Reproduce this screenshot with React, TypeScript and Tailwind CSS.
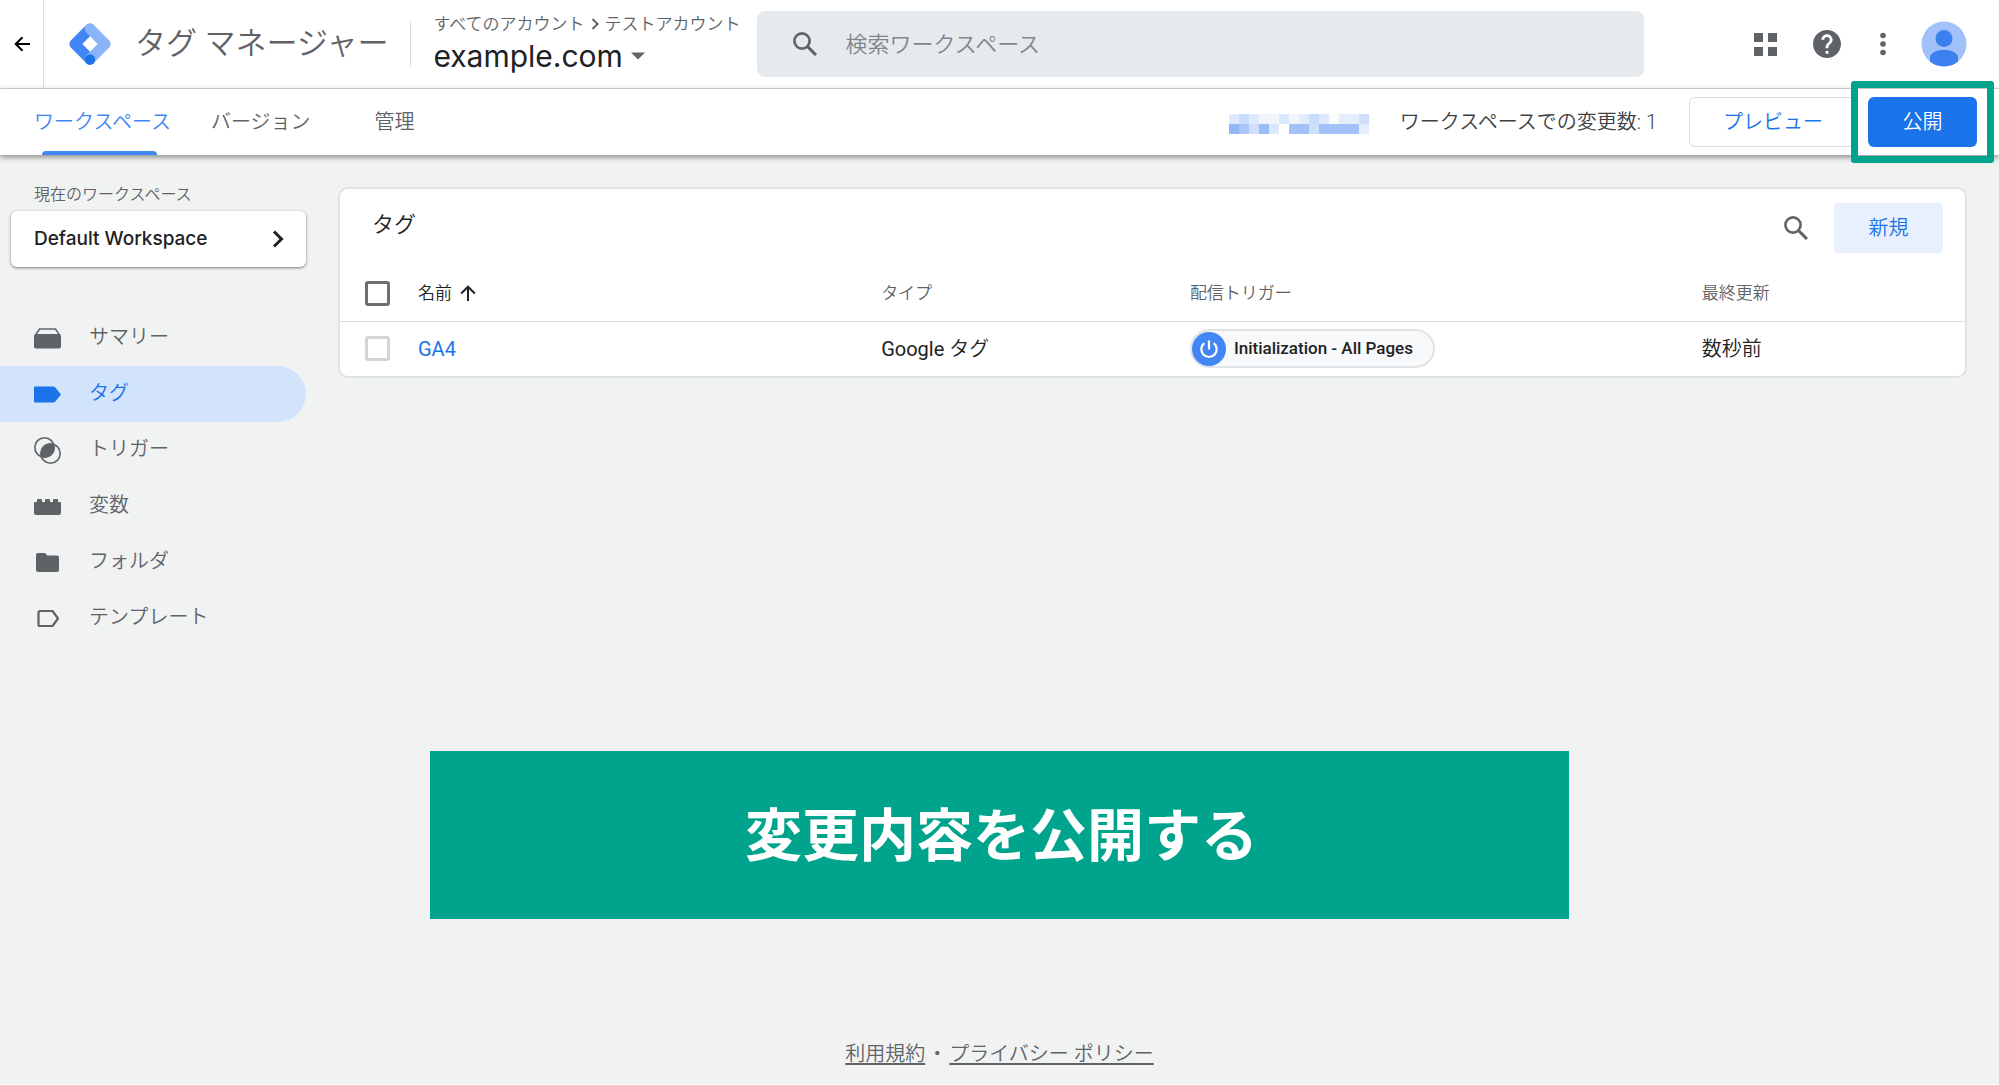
import { useState } from 'react'
import type { ReactNode } from 'react'

type NavItem = { id: string; label: string; icon: ReactNode }

const NAV_ITEMS: NavItem[] = [
  {
    id: 'summary',
    label: 'サマリー',
    icon: (
      <>
        <path d="M1.500 10l4-6h16l4 6" fill="none" stroke="currentColor" strokeWidth="1.4" />
        <path d="M0 11a2 2 0 0 1 2-2h23a2 2 0 0 1 2 2v10.500a2 2 0 0 1-2 2H2a2 2 0 0 1-2-2z" />
      </>
    ),
  },
  {
    id: 'tags',
    label: 'タグ',
    icon: <path d="M0 6.500a1 1 0 0 1 1-1h18.500a2 2 0 0 1 1.600.8L27 13.500l-5.900 7.200a2 2 0 0 1-1.600.8H1a1 1 0 0 1-1-1z" />,
  },
  {
    id: 'triggers',
    label: 'トリガー',
    icon: (
      <>
        <circle cx="10.500" cy="10.500" r="9.700" fill="none" stroke="currentColor" strokeWidth="1.600" />
        <circle cx="16.500" cy="16.500" r="9.700" fill="none" stroke="currentColor" strokeWidth="1.600" />
        <path d="M20 7.200A10 10 0 0 1 7.200 20 10 10 0 0 1 20 7.200z" />
      </>
    ),
  },
  {
    id: 'variables',
    label: '変数',
    icon: <path d="M0 10a1 1 0 0 1 1-1h2V7a1 1 0 0 1 1-1h3a1 1 0 0 1 1 1v2h3V7a1 1 0 0 1 1-1h3a1 1 0 0 1 1 1v2h3V7a1 1 0 0 1 1-1h3a1 1 0 0 1 1 1v2h2a1 1 0 0 1 1 1v10a2 2 0 0 1-2 2H2a2 2 0 0 1-2-2z" />,
  },
  {
    id: 'folders',
    label: 'フォルダ',
    icon: <path d="M2 6a2 2 0 0 1 2-2h7l2.500 2.500H23a2 2 0 0 1 2 2V21a2 2 0 0 1-2 2H4a2 2 0 0 1-2-2z" />,
  },
  {
    id: 'templates',
    label: 'テンプレート',
    icon: <path d="M4.500 7.500A1.500 1.500 0 0 1 6 6h12.500l5.500 7.500-5.500 7.500H6a1.500 1.500 0 0 1-1.500-1.500z" fill="none" stroke="currentColor" strokeWidth="2.200" strokeLinejoin="round" />,
  },
]

const TABS = [
  { id: 'workspace', label: 'ワークスペース' },
  { id: 'versions', label: 'バージョン' },
  { id: 'admin', label: '管理' },
]

// redacted container id, one colour per block
const MASK = [
  ['#dfe9fc', '#cadcfb', '#dfe9fc', '#f1f4f8', '#f1f5fc', '#dbe7fc', '#f1f4f8', '#e4edfd', '#cadcfb', '#dfe9fc', '#fafbfd', '#e4edfd', '#e4edfd', '#cfdffb'],
  ['#93b7f5', '#a9c6f8', '#cfdffb', '#9bbcf5', '#dbe7fc', '#ffffff', '#a2c1f7', '#a2c1f7', '#cfdffb', '#a2c1f7', '#a2c1f7', '#a2c1f7', '#a2c1f7', '#e4edfd'],
]

function SearchIcon() {
  return (
    <svg viewBox="0 0 24 24" className="size-6 shrink-0 text-[#5f6368]" fill="none" stroke="currentColor" strokeWidth="2.600" aria-hidden="true">
      <circle cx="9" cy="9" r="7.600" />
      <path d="M14.600 14.600l8.400 8.400" strokeWidth="3" />
    </svg>
  )
}

function Header() {
  return (
    <header className="flex h-[89px] items-center border-b border-[#dadce0] bg-white pr-8">
      <button aria-label="戻る" className="flex h-full w-11 shrink-0 items-center justify-center border-r border-[#dadce0] text-black">
        <svg viewBox="0 0 16 16" className="size-4" fill="none" stroke="currentColor" strokeWidth="2" aria-hidden="true">
          <path d="M16 8H2M8.500 1.200L1.700 8l6.800 6.800" />
        </svg>
      </button>

      <a href="#home" className="ml-[25px] flex shrink-0 items-center gap-6">
        <svg viewBox="0 0 42 42" className="size-[42px]" fill="none" strokeWidth="10.800" strokeLinejoin="round" strokeLinecap="round" aria-hidden="true">
          <path d="M21 5.800L5.800 21 21 36.200" stroke="#4285f4" />
          <path d="M21 5.800L36.200 21 21 36.200" stroke="#8ab4f8" />
          <circle cx="21" cy="36.500" r="5.200" fill="#1a73e8" />
        </svg>
        <span className="text-[31px] leading-10 font-[350] text-[#5f6368]">タグ マネージャー</span>
      </a>

      <div className="ml-[22px] h-11 w-px shrink-0 bg-[#dadce0]" />

      <div className="ml-[22px] w-[324px] shrink-0">
        <nav className="flex items-center gap-1.5 text-[17px] leading-6 font-[350] text-[#5f6368]">
          <a href="#accounts">すべてのアカウント</a>
          <svg viewBox="0 0 8 12" className="h-3 w-2" fill="none" stroke="currentColor" strokeWidth="2" aria-hidden="true">
            <path d="M1.500 1l5 5-5 5" />
          </svg>
          <a href="#account">テストアカウント</a>
        </nav>
        <button className="flex items-center gap-2 font-[Inter] text-[30px] leading-10 text-[#202124]">
          example.com
          <svg viewBox="0 0 14 8" className="h-2 w-3.5 text-[#5f6368]" fill="currentColor" aria-hidden="true">
            <path d="M0 .5h14l-7 7z" />
          </svg>
        </button>
      </div>

      <label className="flex h-[66px] min-w-0 flex-1 items-center gap-7 rounded-lg bg-[#e6eaed] px-9">
        <SearchIcon />
        <input
          type="search"
          aria-label="検索ワークスペース"
          placeholder="検索ワークスペース"
          className="min-w-0 flex-1 bg-transparent text-[22px] font-[350] text-[#202124] outline-none placeholder:text-[#80868b]"
        />
      </label>

      <div className="ml-[109px] flex shrink-0 items-center text-[#5f6368]">
        <button aria-label="アプリ">
          <svg viewBox="0 0 24 24" className="size-6" fill="currentColor" aria-hidden="true">
            <path d="M1 1h9v9H1zM15 1h9v9h-9zM1 15h9v9H1zM15 15h9v9h-9z" />
          </svg>
        </button>
        <button aria-label="ヘルプ" className="ml-9">
          <svg viewBox="2 2 20 20" className="size-7" fill="currentColor" aria-hidden="true">
            <path d="M12 2C6.480 2 2 6.480 2 12s4.480 10 10 10 10-4.480 10-10S17.520 2 12 2zm1 17h-2v-2h2v2zm2.070-7.750l-.9.920C13.450 12.900 13 13.500 13 15h-2v-.5c0-1.100.45-2.100 1.170-2.830l1.240-1.260c.37-.36.590-.86.590-1.410 0-1.100-.9-2-2-2s-2 .9-2 2H8c0-2.210 1.790-4 4-4s4 1.790 4 4c0 .88-.36 1.680-.93 2.250z" />
          </svg>
        </button>
        <button aria-label="その他" className="ml-9">
          <svg viewBox="0 0 12 24" className="h-6 w-3" fill="currentColor" aria-hidden="true">
            <circle cx="6" cy="3.500" r="2.800" />
            <circle cx="6" cy="12" r="2.800" />
            <circle cx="6" cy="20.500" r="2.800" />
          </svg>
        </button>
        <button aria-label="アカウント" className="ml-8">
          <svg viewBox="0 0 46 46" className="size-[46px]" aria-hidden="true">
            <circle cx="23" cy="23" r="22.500" fill="#a0c1fa" />
            <circle cx="23" cy="17.500" r="8.500" fill="#3b80ee" />
            <path d="M9 40.500V37c0-5.500 7-8 14-8s14 2.500 14 8v3.500a22.500 22.500 0 0 1-28 0z" fill="#3b80ee" />
          </svg>
        </button>
      </div>
    </header>
  )
}

function TabBar() {
  const [active, setActive] = useState('workspace')

  return (
    <div className="relative flex h-[66px] items-center justify-between bg-white pr-[22px] shadow-[0_2px_6px_rgba(0,0,0,0.45)]">
      <nav className="flex h-full items-stretch gap-10 pl-[34px]">
        {TABS.map(t => (
          <button
            key={t.id}
            onClick={() => setActive(t.id)}
            className={`relative text-xl font-[350] last:ml-6 ${t.id === active ? 'text-[#4285f4]' : 'text-[#5f6368]'}`}
          >
            {t.label}
            {t.id === active && <span className="absolute right-3.5 bottom-0 left-2 h-1 rounded-t bg-[#4285f4]" />}
          </button>
        ))}
      </nav>

      <div className="flex items-center">
        <div className="grid grid-cols-14 pt-1">
          {MASK.flat().map((color, i) => (
            <span key={i} className="size-[10px]" style={{ backgroundColor: color }} />
          ))}
        </div>
        <p className="ml-[31px] text-xl font-[350] text-[#3c4043]">ワークスペースでの変更数: 1</p>
        <button className="ml-8 h-[50px] w-[168px] rounded-md border border-[#dadce0] text-xl font-[350] text-[#1a73e8]">プレビュー</button>
        <div className="relative ml-[11px] flex">
          <button className="h-[50px] w-[109px] rounded-md bg-[#1a73e8] text-xl font-[350] text-white">公開</button>
          <span className="pointer-events-none absolute -inset-x-[17px] -inset-y-4 rounded-[3px] border-[7px] border-[#00a38b]" />
        </div>
      </div>
    </div>
  )
}

function Sidebar() {
  const [current, setCurrent] = useState('tags')

  return (
    <aside className="w-[306px] shrink-0 pt-6">
      <p className="pl-[34px] text-base leading-8 font-[350] text-[#5f6368]">現在のワークスペース</p>
      <div className="pl-[11px]">
        <button className="flex h-14 w-full items-center justify-between rounded-md bg-white pr-[22px] pl-[23px] font-[Inter] text-[19px] font-medium text-[#202124] shadow-[0_1px_3px_rgba(0,0,0,0.5)]">
          Default Workspace
          <svg viewBox="0 0 12 18" className="h-[18px] w-3" fill="none" stroke="currentColor" strokeWidth="3" aria-hidden="true">
            <path d="M2 1.500L9.500 9 2 16.500" />
          </svg>
        </button>
      </div>
      <nav className="mt-[43px] flex flex-col">
        {NAV_ITEMS.map(item => (
          <a
            key={item.id}
            href={`#${item.id}`}
            onClick={() => setCurrent(item.id)}
            className={`flex h-14 items-center gap-7 rounded-r-full pl-[34px] text-xl font-[350] ${
              item.id === current ? 'bg-[#d2e3fc] text-[#1a73e8]' : 'text-[#5f6368]'
            }`}
          >
            <svg viewBox="0 0 27 27" className="size-[27px]" fill="currentColor" aria-hidden="true">
              {item.icon}
            </svg>
            <span className="pb-0.5">{item.label}</span>
          </a>
        ))}
      </nav>
    </aside>
  )
}

function TagTable() {
  return (
    <section className="overflow-hidden rounded-[10px] border-2 border-[#e0e3e6] bg-white">
      <div className="flex h-[77px] items-center justify-between pr-[22px] pl-8">
        <h1 className="pb-1.5 text-[22px] font-[350] text-[#202124]">タグ</h1>
        <div className="flex items-center gap-[26px]">
          <button aria-label="検索">
            <SearchIcon />
          </button>
          <button className="h-[50px] w-[109px] rounded bg-[#e8f0fe] text-xl font-[350] text-[#1a73e8]">新規</button>
        </div>
      </div>

      <table className="w-full table-fixed text-left font-[350]">
        <colgroup>
          <col className="w-[78px]" />
          <col className="w-[28.5%]" />
          <col className="w-[19%]" />
          <col className="w-[31.5%]" />
          <col />
        </colgroup>
        <thead>
          <tr className="h-[55px] border-b border-[#dadce0] text-[17px] text-[#5f6368]">
            <th className="pl-[25px]">
              <input type="checkbox" aria-label="すべて選択" className="block size-[25px] appearance-none rounded-[3px] border-3 border-[#6b6f73]" />
            </th>
            <th className="font-[350] text-[#202124]">
              <button className="flex items-center gap-2">
                名前
                <svg viewBox="0 0 16 16" className="size-4" fill="none" stroke="currentColor" strokeWidth="2" aria-hidden="true">
                  <path d="M8 16V2M1.200 8.500L8 1.700l6.800 6.800" />
                </svg>
              </button>
            </th>
            <th className="font-[350]">タイプ</th>
            <th className="font-[350]">配信トリガー</th>
            <th className="font-[350]">最終更新</th>
          </tr>
        </thead>
        <tbody>
          <tr className="h-[55px] text-xl text-[#202124]">
            <td className="pl-[25px]">
              <input type="checkbox" aria-label="GA4 を選択" className="block size-[25px] appearance-none rounded-[3px] border-3 border-[#d2d4d6]" />
            </td>
            <td>
              <a href="#ga4" className="font-normal text-[#1a73e8]">GA4</a>
            </td>
            <td>
              <span className="font-normal">Google</span> タグ
            </td>
            <td>
              <a href="#trigger" className="flex h-[39px] w-fit items-center gap-2 rounded-full border-2 border-[#e0e3e6] bg-[#f8f9fa] pr-5 text-[17px] font-medium">
                <svg viewBox="0 0 34 34" className="size-[34px]" fill="none" stroke="#fff" strokeWidth="2.200" aria-hidden="true">
                  <circle cx="17" cy="17" r="17" fill="#4285f4" stroke="none" />
                  <path d="M17 8.500v9M12.300 11.200a7.700 7.700 0 1 0 9.400 0" />
                </svg>
                Initialization - All Pages
              </a>
            </td>
            <td>数秒前</td>
          </tr>
        </tbody>
      </table>
    </section>
  )
}

export default function App() {
  return (
    <div className="flex min-h-screen flex-col border-b border-white bg-[#f1f3f3] font-[Roboto,'Noto_Sans_CJK_JP',sans-serif]">
      <Header />
      <TabBar />

      <div className="flex items-start gap-8 pr-8">
        <Sidebar />
        <main className="min-w-0 flex-1 pt-8">
          <TagTable />
        </main>
      </div>

      <p className="mx-auto mt-[105px] flex h-[168px] w-[57%] items-center justify-center bg-[#00a38b] pt-1 pl-1 text-[57px] font-bold text-white">
        変更内容を公開する
      </p>

      <footer className="mt-auto flex items-center justify-center gap-0.5 pt-10 pb-3.5 text-xl leading-8 font-[350] text-[#5f6368]">
        <a href="#terms" className="underline underline-offset-2">利用規約</a>
        <span>・</span>
        <a href="#privacy" className="underline underline-offset-2">プライバシー ポリシー</a>
      </footer>
    </div>
  )
}
